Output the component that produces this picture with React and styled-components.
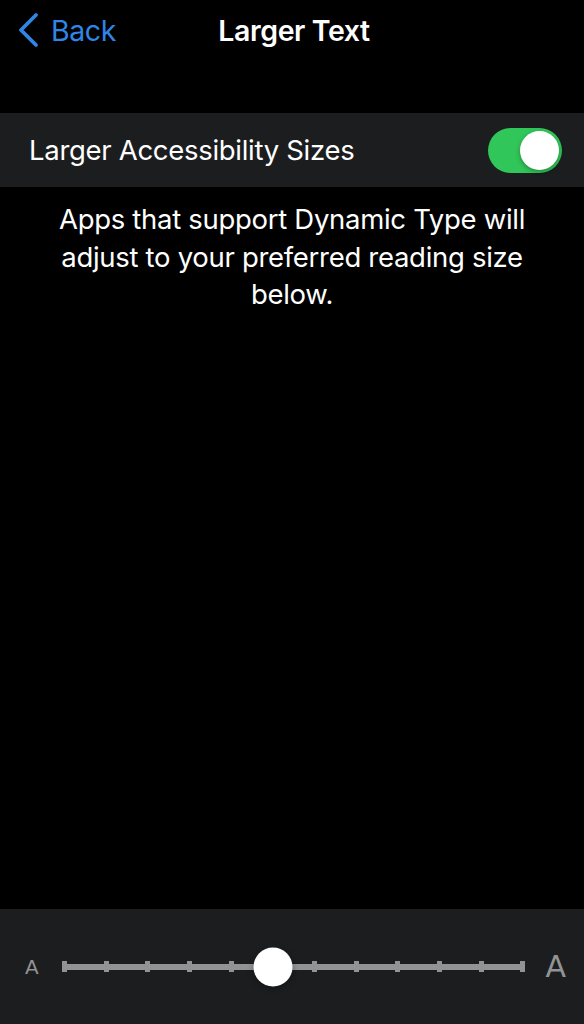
import React from "react";
import styled, { createGlobalStyle } from "styled-components";

const panel = "#1c1d1f";
const gray = "#929395";

const Global = createGlobalStyle`
  html, body {
    margin: 0;
    padding: 0;
    background: #000;
  }
  body {
    font-family: Inter, "Noto Sans", "Liberation Sans", sans-serif;
    color: #fff;
    -webkit-font-smoothing: antialiased;
  }
`;

const Screen = styled.div`
  display: flex;
  flex-direction: column;
  min-height: 100vh;
  background: #000;
`;

const Nav = styled.div`
  display: grid;
  grid-template-columns: 1fr auto 1fr;
  align-items: center;
  height: 60px;
  padding: 0 16px;
`;

const BackButton = styled.button`
  justify-self: start;
  display: flex;
  align-items: center;
  gap: 11px;
  background: none;
  border: 0;
  padding: 0;
  color: #2f86e6;
  font-family: inherit;
  font-size: 28.5px;
  letter-spacing: -0.4px;
  cursor: pointer;
`;

const Title = styled.h1`
  margin: 0;
  font-size: 28.5px;
  font-weight: 600;
  letter-spacing: -0.4px;
  padding-left: 4px;
`;

const Group = styled.div`
  margin-top: 53px;
  background: ${panel};
`;

const Row = styled.div`
  display: flex;
  align-items: center;
  justify-content: space-between;
  height: 74px;
  padding: 0 22px 0 29px;
`;

const Label = styled.span`
  font-size: 27.5px;
  letter-spacing: -0.3px;
`;

const Switch = styled.div`
  position: relative;
  width: 74px;
  height: 45px;
  border-radius: 23px;
  background: ${(p) => (p.on ? "#31c659" : "#39393d")};
`;

const Knob = styled.div`
  position: absolute;
  top: 3px;
  left: ${(p) => (p.on ? "32px" : "3px")};
  width: 39px;
  height: 39px;
  border-radius: 50%;
  background: #fff;
  box-shadow: 0 2px 5px rgba(0, 0, 0, 0.3);
`;

const Footer = styled.p`
  margin: 14px 0 0;
  padding: 0 45px;
  text-align: center;
  font-size: 27.5px;
  line-height: 37.5px;
  letter-spacing: -0.3px;
`;

const Bottom = styled.div`
  margin-top: auto;
  height: 115px;
  background: ${panel};
  display: flex;
  align-items: center;
  gap: 20px;
  padding: 0 18px 0 25px;
`;

const SmallA = styled.span`
  color: ${gray};
  font-size: 20px;
  font-family: "DejaVu Sans", sans-serif;
  width: 17px;
`;

const BigA = styled.span`
  color: ${gray};
  font-size: 30px;
  font-family: "DejaVu Sans", sans-serif;
`;

const Track = styled.div`
  position: relative;
  flex: 1;
  height: 6px;
  background: ${gray};
  display: flex;
  justify-content: space-between;
  align-items: center;
`;

const Tick = styled.div`
  width: 5px;
  height: 11px;
  background: ${gray};
`;

const Thumb = styled.div`
  position: absolute;
  top: 50%;
  width: 39px;
  height: 39px;
  border-radius: 50%;
  background: #fff;
  transform: translate(-50%, -50%);
  box-shadow: 0 2px 6px rgba(0, 0, 0, 0.35);
`;

const Chevron = () => (
  <svg width="24" height="36" viewBox="0 0 24 36">
    <path
      d="M20 3 L5 18 L20 33"
      fill="none"
      stroke="#2f86e6"
      strokeWidth="3.8"
      strokeLinecap="round"
      strokeLinejoin="round"
    />
  </svg>
);

const STEPS = 12;
const value = 5;

export default function App() {
  return (
    <>
      <Global />
      <Screen>
        <Nav>
          <BackButton>
            <Chevron />
            Back
          </BackButton>
          <Title>Larger Text</Title>
          <span />
        </Nav>
        <Group>
          <Row>
            <Label>Larger Accessibility Sizes</Label>
            <Switch on>
              <Knob on />
            </Switch>
          </Row>
        </Group>
        <Footer>
          Apps that support Dynamic Type will adjust to your preferred reading
          size below.
        </Footer>
        <Bottom>
          <SmallA>A</SmallA>
          <Track>
            {Array.from({ length: STEPS }).map((_, i) => (
              <Tick key={i} />
            ))}
            <Thumb style={{ left: `${(value / (STEPS - 1)) * 100}%` }} />
          </Track>
          <BigA>A</BigA>
        </Bottom>
      </Screen>
    </>
  );
}
